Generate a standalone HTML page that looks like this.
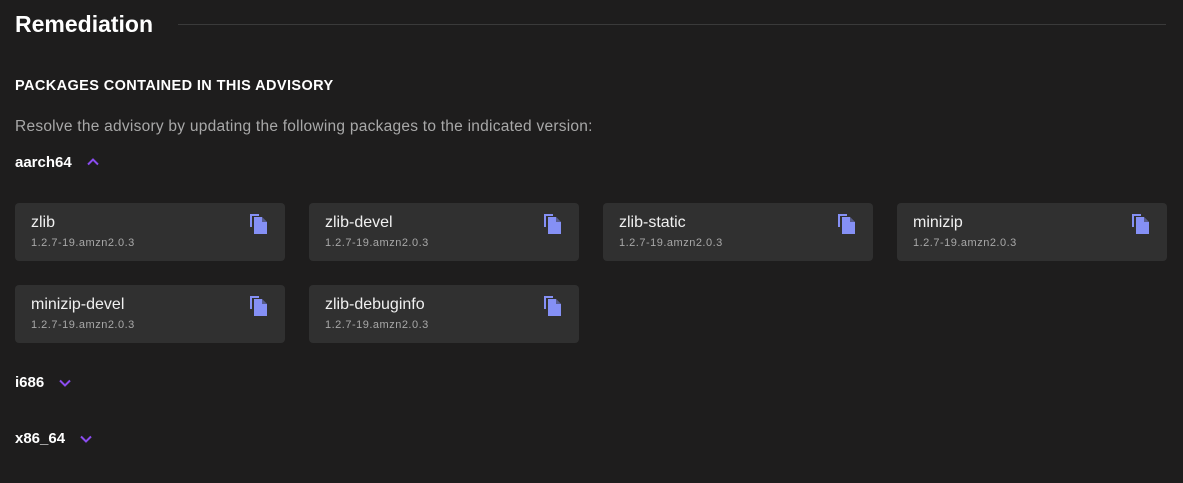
<!DOCTYPE html>
<html><head><meta charset="utf-8"><style>
*{margin:0;padding:0;box-sizing:border-box}
body{width:1183px;height:483px;background:#1e1d1d;font-family:"Liberation Sans",sans-serif;color:#fff;position:relative;overflow:hidden}
.abs{position:absolute}
h1{position:absolute;left:15px;top:11px;font-size:23px;font-weight:700;letter-spacing:0}
.line{position:absolute;left:178px;top:24px;width:988px;height:1px;background:#3a3a3a}
.sub{left:15px;top:78px;font-size:14.5px;font-weight:700;letter-spacing:0.4px}
.desc{left:15px;top:118px;font-size:15.5px;color:#a8a8a8;letter-spacing:0.25px}
.arch{font-size:15px;font-weight:700}
.card{position:absolute;width:270px;height:58px;background:#303030;border-radius:4px}
.card .n{position:absolute;left:16px;top:11px;font-size:16px;color:#f0f0f0}
.card .v{position:absolute;left:16px;top:34px;font-size:11px;color:#a8a8a8;letter-spacing:0.5px}
.card svg{position:absolute;left:234px;top:10px}
</style></head><body>
<h1>Remediation</h1><div class="line"></div>
<div class="abs sub">PACKAGES CONTAINED IN THIS ADVISORY</div>
<div class="abs desc">Resolve the advisory by updating the following packages to the indicated version:</div>
<div class="abs arch" style="left:15px;top:154px">aarch64</div>
<svg class="abs" style="left:86px;top:157px" width="14" height="10" viewBox="0 0 14 10"><path d="M2 7.5L7 2.5L12 7.5" stroke="#8b4cf0" stroke-width="2" fill="none"/></svg>
<div class="abs arch" style="left:15px;top:374px">i686</div>
<svg class="abs" style="left:58px;top:378px" width="14" height="10" viewBox="0 0 14 10"><path d="M2 2.5L7 7.5L12 2.5" stroke="#8b4cf0" stroke-width="2" fill="none"/></svg>
<div class="abs arch" style="left:15px;top:430px">x86_64</div>
<svg class="abs" style="left:79px;top:434px" width="14" height="10" viewBox="0 0 14 10"><path d="M2 2.5L7 7.5L12 2.5" stroke="#8b4cf0" stroke-width="2" fill="none"/></svg>

<div class="card" style="left:15px;top:203px"><div class="n">zlib</div><div class="v">1.2.7-19.amzn2.0.3</div><svg width="20" height="22" viewBox="0 0 20 22"><path d="M1 1h2v13H1z M1 1h9v2H1z" fill="#8590f5"/><path d="M5 4h8l5 5v12H5z" fill="#8590f5"/><path d="M13 4v5h5" fill="#303030" opacity=".55"/></svg></div>
<div class="card" style="left:309px;top:203px"><div class="n">zlib-devel</div><div class="v">1.2.7-19.amzn2.0.3</div><svg width="20" height="22" viewBox="0 0 20 22"><path d="M1 1h2v13H1z M1 1h9v2H1z" fill="#8590f5"/><path d="M5 4h8l5 5v12H5z" fill="#8590f5"/><path d="M13 4v5h5" fill="#303030" opacity=".55"/></svg></div>
<div class="card" style="left:603px;top:203px"><div class="n">zlib-static</div><div class="v">1.2.7-19.amzn2.0.3</div><svg width="20" height="22" viewBox="0 0 20 22"><path d="M1 1h2v13H1z M1 1h9v2H1z" fill="#8590f5"/><path d="M5 4h8l5 5v12H5z" fill="#8590f5"/><path d="M13 4v5h5" fill="#303030" opacity=".55"/></svg></div>
<div class="card" style="left:897px;top:203px"><div class="n">minizip</div><div class="v">1.2.7-19.amzn2.0.3</div><svg width="20" height="22" viewBox="0 0 20 22"><path d="M1 1h2v13H1z M1 1h9v2H1z" fill="#8590f5"/><path d="M5 4h8l5 5v12H5z" fill="#8590f5"/><path d="M13 4v5h5" fill="#303030" opacity=".55"/></svg></div>
<div class="card" style="left:15px;top:285px"><div class="n">minizip-devel</div><div class="v">1.2.7-19.amzn2.0.3</div><svg width="20" height="22" viewBox="0 0 20 22"><path d="M1 1h2v13H1z M1 1h9v2H1z" fill="#8590f5"/><path d="M5 4h8l5 5v12H5z" fill="#8590f5"/><path d="M13 4v5h5" fill="#303030" opacity=".55"/></svg></div>
<div class="card" style="left:309px;top:285px"><div class="n">zlib-debuginfo</div><div class="v">1.2.7-19.amzn2.0.3</div><svg width="20" height="22" viewBox="0 0 20 22"><path d="M1 1h2v13H1z M1 1h9v2H1z" fill="#8590f5"/><path d="M5 4h8l5 5v12H5z" fill="#8590f5"/><path d="M13 4v5h5" fill="#303030" opacity=".55"/></svg></div>
</body></html>
